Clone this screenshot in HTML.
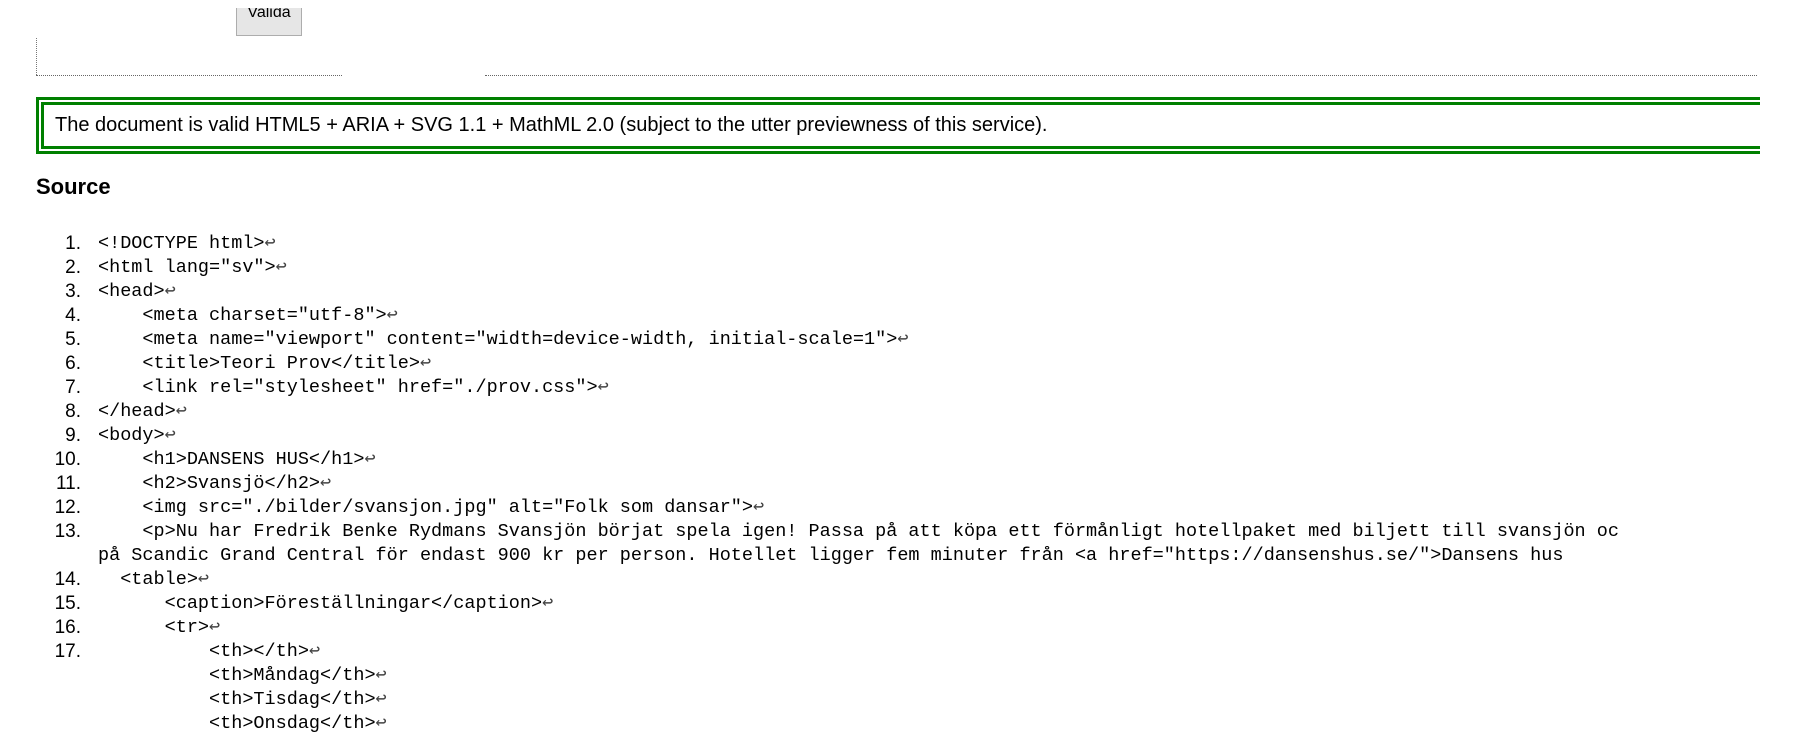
<!DOCTYPE html>
<html><head><meta charset="utf-8"><style>
html,body{margin:0;padding:0;background:#fff;width:1801px;height:738px;overflow:hidden;position:relative;font-family:"Liberation Sans",Arial,sans-serif;color:#000}
.btn{position:absolute;left:236px;top:8px;width:66px;height:28px;background:#e6e6e6;border:1px solid #adadad;border-top:none;box-sizing:border-box;overflow:hidden;font-size:16px;line-height:14px;text-align:center}
.btn span{display:block;margin-top:-2px}
.vl{position:absolute;left:36px;top:38px;height:37px;border-left:1px dotted #777}
.hl{position:absolute;top:75px;border-top:1px dotted #666}
.ok{position:absolute;left:36px;top:97px;width:1724px;height:57px;border:8px double #008000;border-right:none;box-sizing:border-box;font-size:20px;line-height:41px;padding-left:11px;white-space:nowrap}
h2{position:absolute;left:36px;top:174px;margin:0;font-size:22px;font-weight:bold}
.src{position:absolute;left:0;top:232px;width:1620px;overflow:hidden;font-family:"Liberation Mono",monospace;font-size:18.5px;line-height:24px}
.r{position:relative;height:24px;white-space:pre}
.n{position:absolute;left:0;width:81px;text-align:right;font-family:"Liberation Sans",Arial,sans-serif;font-size:19px}
.c{position:absolute;left:98px}
.a{color:#444}
</style></head><body>
<div class="btn"><span>Valida</span></div>
<div class="vl"></div>
<div class="hl" style="left:36px;width:306px"></div>
<div class="hl" style="left:485px;width:1272px"></div>
<div class="ok">The document is valid HTML5 + ARIA + SVG 1.1 + MathML 2.0 (subject to the utter previewness of this service).</div>
<h2>Source</h2>
<div class="src">
<div class="r"><span class="n">1.</span><span class="c">&lt;!DOCTYPE html&gt;<span class="a">↩</span></span></div>
<div class="r"><span class="n">2.</span><span class="c">&lt;html lang="sv"&gt;<span class="a">↩</span></span></div>
<div class="r"><span class="n">3.</span><span class="c">&lt;head&gt;<span class="a">↩</span></span></div>
<div class="r"><span class="n">4.</span><span class="c">    &lt;meta charset="utf-8"&gt;<span class="a">↩</span></span></div>
<div class="r"><span class="n">5.</span><span class="c">    &lt;meta name="viewport" content="width=device-width, initial-scale=1"&gt;<span class="a">↩</span></span></div>
<div class="r"><span class="n">6.</span><span class="c">    &lt;title&gt;Teori Prov&lt;/title&gt;<span class="a">↩</span></span></div>
<div class="r"><span class="n">7.</span><span class="c">    &lt;link rel="stylesheet" href="./prov.css"&gt;<span class="a">↩</span></span></div>
<div class="r"><span class="n">8.</span><span class="c">&lt;/head&gt;<span class="a">↩</span></span></div>
<div class="r"><span class="n">9.</span><span class="c">&lt;body&gt;<span class="a">↩</span></span></div>
<div class="r"><span class="n">10.</span><span class="c">    &lt;h1&gt;DANSENS HUS&lt;/h1&gt;<span class="a">↩</span></span></div>
<div class="r"><span class="n">11.</span><span class="c">    &lt;h2&gt;Svansjö&lt;/h2&gt;<span class="a">↩</span></span></div>
<div class="r"><span class="n">12.</span><span class="c">    &lt;img src="./bilder/svansjon.jpg" alt="Folk som dansar"&gt;<span class="a">↩</span></span></div>
<div class="r"><span class="n">13.</span><span class="c">    &lt;p&gt;Nu har Fredrik Benke Rydmans Svansjön börjat spela igen! Passa på att köpa ett förmånligt hotellpaket med biljett till svansjön och</span></div>
<div class="r"><span class="c">på Scandic Grand Central för endast 900 kr per person. Hotellet ligger fem minuter från &lt;a href="https://dansenshus.se/"&gt;Dansens hus</span></div>
<div class="r"><span class="n">14.</span><span class="c">  &lt;table&gt;<span class="a">↩</span></span></div>
<div class="r"><span class="n">15.</span><span class="c">      &lt;caption&gt;Föreställningar&lt;/caption&gt;<span class="a">↩</span></span></div>
<div class="r"><span class="n">16.</span><span class="c">      &lt;tr&gt;<span class="a">↩</span></span></div>
<div class="r"><span class="n">17.</span><span class="c">          &lt;th&gt;&lt;/th&gt;<span class="a">↩</span></span></div>
<div class="r"><span class="c">          &lt;th&gt;Måndag&lt;/th&gt;<span class="a">↩</span></span></div>
<div class="r"><span class="c">          &lt;th&gt;Tisdag&lt;/th&gt;<span class="a">↩</span></span></div>
<div class="r"><span class="c">          &lt;th&gt;Onsdag&lt;/th&gt;<span class="a">↩</span></span></div>
</div>
</body></html>
